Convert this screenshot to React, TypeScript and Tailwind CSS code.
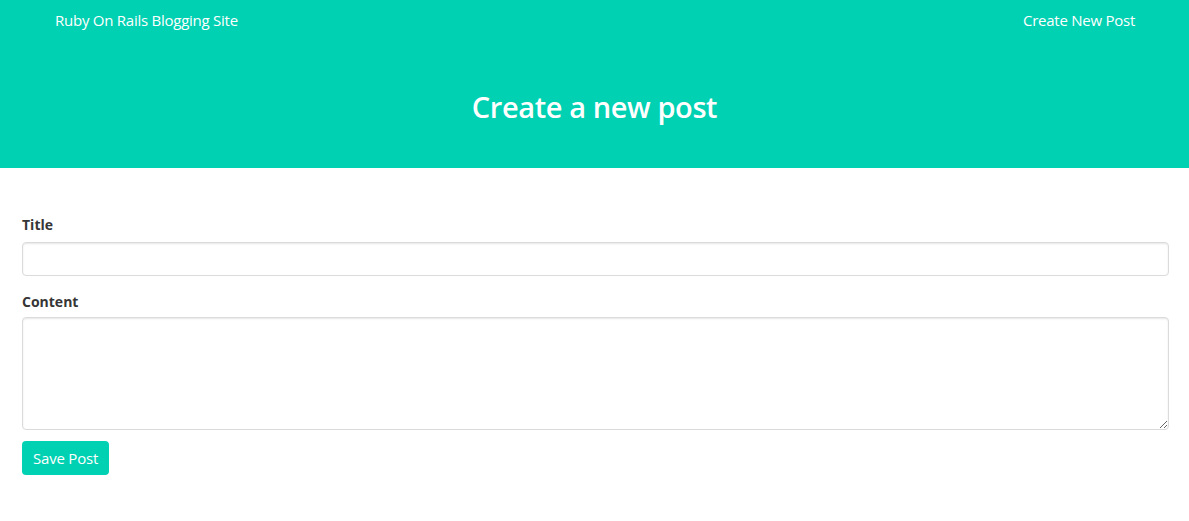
import * as React from "react";

const font = { fontFamily: '"Open Sans", "Noto Sans", sans-serif' };

export default function App() {
  return (
    <div className="min-h-screen bg-white" style={font}>
      <section className="bg-[#00d1b2] text-white h-[168px] flex flex-col">
        <nav className="flex items-center justify-between pl-[55px] pr-[54px] h-[41px] text-[15px] tracking-[-0.25px]">
          <a href="#">Ruby On Rails Blogging Site</a>
          <a href="#">Create New Post</a>
        </nav>
        <div className="flex-1 flex items-center justify-center pt-[4px]">
          <h1 className="text-[29px] font-semibold tracking-[-0.4px]">Create a new post</h1>
        </div>
      </section>
      <form className="pl-[22px] pr-[20px] pt-[46px] text-[#363636]">
        <label className="block text-[14px] font-bold leading-[22px] mb-[6px]">Title</label>
        <input
          type="text"
          className="block w-full h-[34px] border border-[#dbdbdb] rounded-[4px] shadow-[inset_0_1px_2px_rgba(10,10,10,0.1)] outline-none px-2"
        />
        <label className="block text-[14px] font-bold leading-[22px] mt-[15px] mb-[4px]">Content</label>
        <textarea className="block w-full h-[113px] border border-[#dbdbdb] rounded-[4px] shadow-[inset_0_1px_2px_rgba(10,10,10,0.1)] outline-none px-2" />
        <button
          type="button"
          className="mt-[11px] h-[34px] px-[11px] bg-[#00d1b2] text-white text-[15px] tracking-[-0.2px] rounded-[4px]"
        >
          Save Post
        </button>
      </form>
    </div>
  );
}
